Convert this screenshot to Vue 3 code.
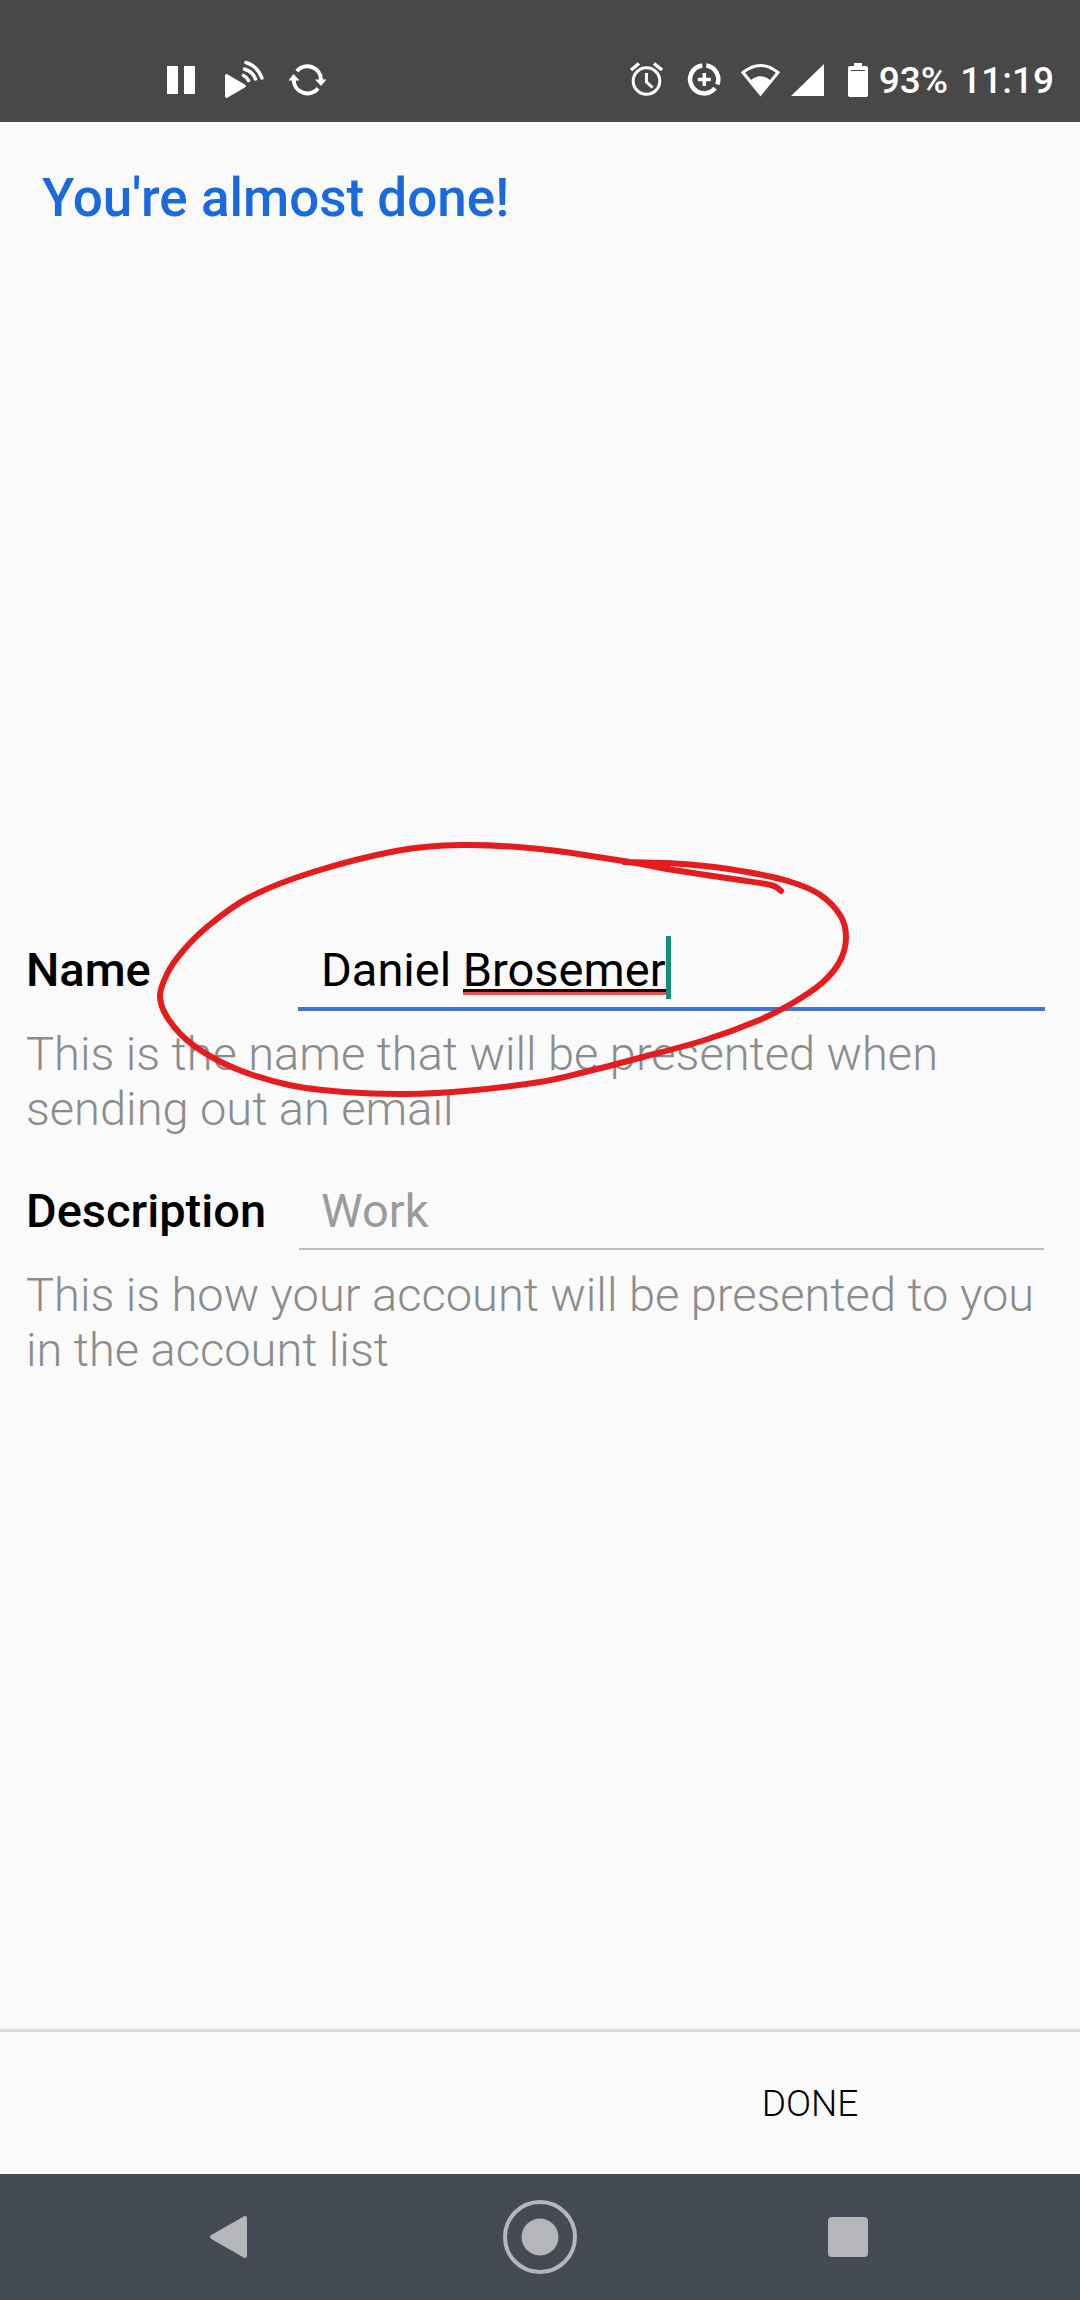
<template>
  <div class="screen">
    <header class="status-bar">
      <div class="status-left">
        <svg width="42" height="44" viewBox="160 56 42 44">
          <path d="M167 66h11v28h-11zM184 66h11v28h-11z" fill="#fff" />
        </svg>
        <svg width="44" height="44" viewBox="222 56 44 44" fill="none" stroke="#fff" stroke-width="3" stroke-linecap="round">
          <path d="M226.500 75.500L244.500 86L226.500 96.500z" fill="#fff" stroke-linejoin="round" />
          <path d="M243.500 75.500Q247 77 248.500 80.500M244.500 69Q252.500 71.500 255.500 79M246 62.500Q257.500 66 262 78" stroke-width="3.500" />
        </svg>
        <svg width="42" height="44" viewBox="286 56 42 44" fill="none" stroke="#fff" stroke-width="4">
          <path d="M296.900 71.100A13.800 13.800 0 0 1 321.100 80M318.100 88.400A13.800 13.800 0 0 1 293.700 80" />
          <path d="M315 79.500h11.500l-5.500 6.500zM288.500 80.500h11l-6-6.500z" fill="#fff" stroke="none" />
        </svg>
      </div>
      <div class="status-right">
        <svg width="50" height="44" viewBox="624 56 50 44" fill="none" stroke="#fff" stroke-width="3">
          <circle cx="645.500" cy="81" r="13.300" />
          <path d="M645.500 73v9l6 5.500" />
          <path d="M630 70l8-6.500M661 70l-8-6.500" stroke-width="3.500" />
        </svg>
        <svg width="50" height="44" viewBox="682 56 50 44" fill="none" stroke="#fff">
          <path d="M705.300 65.500A14 14 0 0 1 716.300 84.500M714 88.200A14 14 0 1 1 701.300 65.500" stroke-width="4.500" />
          <path d="M703.300 73v13M696.800 79.500h13" stroke-width="3.500" />
        </svg>
        <svg width="42" height="44" viewBox="740 56 42 44">
          <path d="M742 72.500Q759.500 58.500 777 72.500L759.500 94z" fill="none" stroke="#fff" stroke-width="3" />
          <path d="M748.500 81Q759.500 71.500 770.500 81L759.500 95z" fill="#fff" />
        </svg>
        <svg width="44" height="44" viewBox="790 56 44 44">
          <path d="M823 64v32h-33z" fill="#fff" />
        </svg>
        <svg width="28" height="44" viewBox="842 56 28 44">
          <path d="M853 63h8v3h4q2 0 2 2v27q0 2-2 2h-16q-2 0-2-2v-27q0-2 2-2h4z" fill="#fff" />
          <path d="M850 70.500h14" stroke="#484848" />
        </svg>
        <span class="battery">93%</span>
        <span class="clock">11:19</span>
      </div>
    </header>

    <main class="content">
      <h1 class="title">You're almost done!</h1>

      <form class="form" @submit.prevent>
        <div class="field">
          <div class="row">
            <label for="name">Name</label>
            <div class="control focused">
              <input id="name" v-model="name" type="text" spellcheck="false" autocomplete="off" />
              <span class="typo" :style="{ left: typoStart + 'px', width: nameEnd - typoStart + 'px' }"></span>
              <span class="caret" :style="{ left: nameEnd + 'px' }"></span>
            </div>
          </div>
          <p class="help">This is the name that will be presented when sending out an email</p>
          <svg class="marker" width="704" height="280" viewBox="150 832 704 280" aria-hidden="true">
            <path :d="markerPath" />
          </svg>
        </div>

        <div class="field">
          <div class="row">
            <label for="description">Description</label>
            <div class="control">
              <input id="description" v-model="description" type="text" placeholder="Work" />
            </div>
          </div>
          <p class="help">This is how your account will be presented to you in the account list</p>
        </div>
      </form>
    </main>

    <footer class="actions">
      <button type="button" class="done">DONE</button>
    </footer>

    <nav class="nav-bar">
      <button type="button" aria-label="Back">
        <svg width="80" height="80" viewBox="0 0 80 80">
          <path d="M22 40L55 21V59z" fill="#b5b6ba" stroke="#b5b6ba" stroke-width="4" stroke-linejoin="round" />
        </svg>
      </button>
      <button type="button" aria-label="Home">
        <svg width="80" height="80" viewBox="0 0 80 80">
          <circle cx="40" cy="40" r="35" fill="none" stroke="#b5b6ba" stroke-width="4" />
          <circle cx="40" cy="40" r="18.500" fill="#b5b6ba" />
        </svg>
      </button>
      <button type="button" aria-label="Recent apps">
        <svg width="80" height="80" viewBox="0 0 80 80">
          <rect x="18" y="20" width="40" height="40" rx="4" fill="#b5b6ba" />
        </svg>
      </button>
    </nav>
  </div>
</template>

<script setup>
import { computed, ref } from 'vue'

const name = ref('Daniel Brosemer')
const description = ref('')

// left padding of the inputs
const INPUT_PADDING = 23

const ctx = document.createElement('canvas').getContext('2d')
const measure = (text) => {
  ctx.font = '400 47px Roboto'
  return Math.round(ctx.measureText(text).width)
}

// the last word is the one the spell checker does not know
const typoStart = computed(() => INPUT_PADDING + measure(name.value.slice(0, name.value.lastIndexOf(' ') + 1)))
const nameEnd = computed(() => INPUT_PADDING + measure(name.value))

const strokePoints = [
  [781, 891], [776, 887], [766, 884], [733, 879], [667, 869], [629, 862], [540, 849], [461, 845],
  [396, 851], [310, 873], [248, 898], [207, 927], [182, 952], [167, 974], [160, 997], [169, 1020],
  [193, 1045], [234, 1068], [289, 1085], [344, 1092], [406, 1094], [465, 1091], [540, 1082],
  [585, 1072], [643, 1057], [705, 1040], [757, 1021], [791, 1004], [822, 983], [840, 961],
  [846, 937], [840, 915], [819, 894], [788, 881], [747, 872], [705, 866], [667, 863], [624, 862]
]

// smooth curve through all points
const markerPath = strokePoints.reduce((d, p, i, pts) => {
  if (i === 0) return `M${p}`
  const p0 = pts[i - 2] || pts[i - 1]
  const p1 = pts[i - 1]
  const p3 = pts[i + 1] || p
  const c1 = [p1[0] + (p[0] - p0[0]) / 6, p1[1] + (p[1] - p0[1]) / 6]
  const c2 = [p[0] - (p3[0] - p1[0]) / 6, p[1] - (p3[1] - p1[1]) / 6]
  return `${d}C${c1} ${c2} ${p}`
}, '')
</script>

<style>
body {
  margin: 0;
  background: #fafafa;
}
</style>

<style scoped>
.screen {
  display: flex;
  flex-direction: column;
  min-height: 100vh;
  background: #fafafa;
  color: #000;
  font-family: Roboto, "Noto Sans", sans-serif;
}

svg {
  display: block;
  flex: none;
}

.status-bar {
  display: flex;
  justify-content: space-between;
  box-sizing: border-box;
  height: 122px;
  padding: 56px 26px 0 160px;
  background: #484848;
  color: #fff;
}

.status-left {
  display: flex;
  gap: 20px;
}

.status-right {
  display: flex;
  gap: 8px;
  font-size: 37px;
  font-weight: 500;
  line-height: 50px;
}

.clock {
  margin-left: 4px;
}

.content {
  display: flex;
  flex: 1;
  flex-direction: column;
}

.title {
  box-sizing: border-box;
  min-height: 168px;
  margin: 0;
  padding: 44px 42px 0;
  color: #1a69df;
  font-size: 53px;
  font-weight: 500;
  line-height: 64px;
}

.form {
  display: flex;
  flex: 1;
  flex-direction: column;
  justify-content: center;
  gap: 47px;
}

.field {
  position: relative;
  padding: 0 35px 0 26px;
}

.row {
  display: flex;
}

.row label {
  width: 272px;
  flex: none;
  font-size: 47px;
  font-weight: 500;
  line-height: 55px;
}

.control {
  position: relative;
  display: flex;
  flex: 1;
  box-sizing: border-box;
  height: 69px;
}

.control::after {
  position: absolute;
  right: 1px;
  bottom: 2px;
  left: 1px;
  height: 2px;
  background: #bebebe;
  content: "";
}

.control.focused::after {
  right: 0;
  bottom: 0;
  left: 0;
  height: 4px;
  background: #3f76cf;
}

.control input {
  width: 100%;
  height: 55px;
  padding: 0 0 0 23px;
  border: 0;
  outline: 0;
  background: transparent;
  color: #000;
  font: 400 47px/55px Roboto, "Noto Sans", sans-serif;
}

.control input::placeholder {
  color: #9b9b9b;
  opacity: 1;
}

.typo {
  position: absolute;
  top: 47px;
  height: 3px;
  border-bottom: 3px solid #e05555;
  background: #200808;
}

.caret {
  position: absolute;
  top: -6px;
  width: 5px;
  height: 63px;
  background: #13907a;
}

.help {
  margin: 15px 0 0;
  color: #8c8c8c;
  font-size: 47px;
  font-weight: 300;
  line-height: 55px;
}

.marker {
  position: absolute;
  top: -110px;
  left: 150px;
  pointer-events: none;
}

.marker path {
  fill: none;
  stroke: #e41c1e;
  stroke-width: 6;
  stroke-linecap: round;
  stroke-linejoin: round;
}

.actions {
  display: flex;
  justify-content: flex-end;
  border-top: 3px solid #dcdcdc;
}

button {
  border: 0;
  background: transparent;
  cursor: pointer;
}

.done {
  width: 50%;
  height: 142px;
  padding: 2px 0 0;
  color: #000;
  font: 300 37px/44px Roboto, "Noto Sans", sans-serif;
}

.nav-bar {
  display: flex;
  justify-content: center;
  height: 126px;
  background: #454b54;
}

.nav-bar button {
  display: flex;
  flex: 0 1 310px;
  align-items: center;
  justify-content: center;
  padding: 0;
}
</style>
